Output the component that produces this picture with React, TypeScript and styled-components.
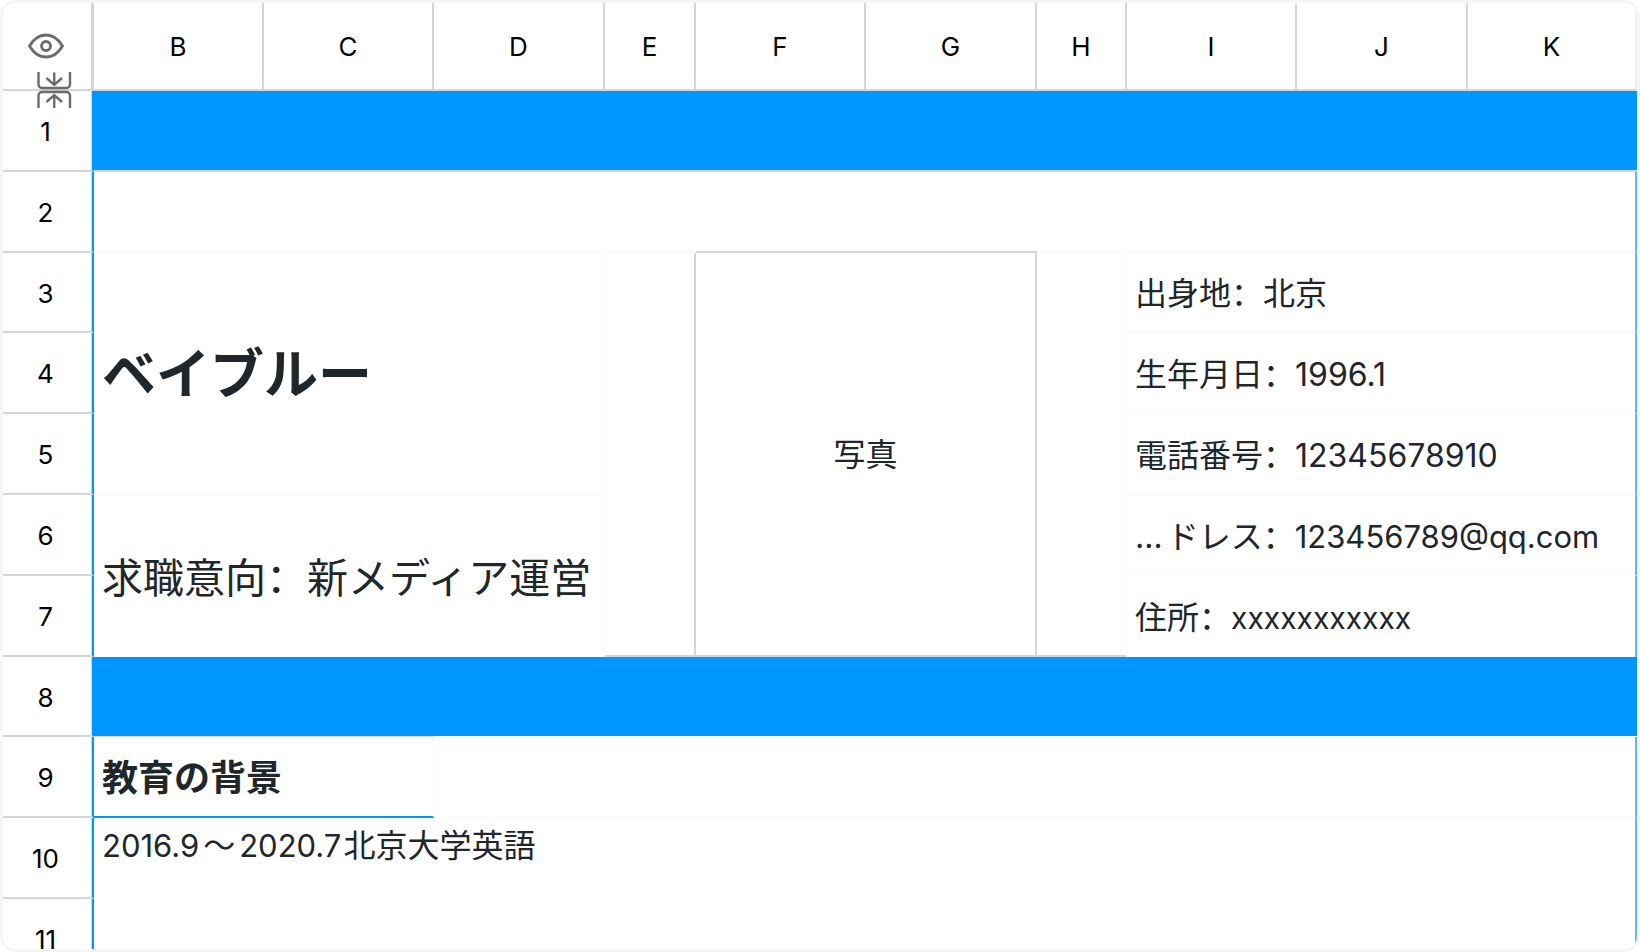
import React from "react";
import styled, { createGlobalStyle } from "styled-components";

const BLUE = "#0096ff";
const LINE = "#d6d6d6";
const FAINT = "#f8f8f8";

const GlobalStyle = createGlobalStyle`
  * { box-sizing: border-box; }
  body {
    margin: 0;
    background: #ffffff;
    font-family: Inter, "Noto Sans CJK JP", sans-serif;
  }
`;

const Frame = styled.main`
  position: relative;
  height: 100vh;
  overflow: hidden;
  border: 3px solid #f6f6f6;
  border-radius: 16px;
  background: #ffffff;
`;

const Sheet = styled.table`
  width: 100%;
  table-layout: fixed;
  border-collapse: separate;
  border-spacing: 0;
  color: #20262a;
`;

const Col = styled.col<{ $width: number }>`
  width: ${(p) => p.$width}px;
`;

const HeadRow = styled.tr`
  height: 88px;
`;

const Row = styled.tr<{ $height: number }>`
  height: ${(p) => p.$height}px;
`;

const ColumnHead = styled.th`
  padding: 2px 0 0;
  border-right: 2px solid ${LINE};
  border-bottom: 2px solid ${LINE};
  font-size: 26px;
  font-weight: 400;
  line-height: 32px;
  color: #000000;

  &:last-child {
    border-right-color: #f0f0f0;
  }
`;

const Corner = styled.td`
  padding: 0 2px 0 0;
  border-right: 3px solid ${LINE};
  border-bottom: 2px solid ${LINE};
`;

const IconButton = styled.button`
  display: block;
  margin: 0 auto;
  padding: 0;
  border: 0;
  background: none;
  color: #6b6b6b;

  svg {
    display: block;
  }
`;

const CollapseButton = styled(IconButton)`
  position: absolute;
  left: 33px;
  top: 68px;
`;

const RowHead = styled.th`
  padding: 3px 4px 0 0;
  border-right: 2px solid ${BLUE};
  border-bottom: 2px solid ${LINE};
  box-shadow: inset -1px 0 0 ${LINE};
  font-size: 26px;
  font-weight: 400;
  line-height: 32px;
  color: #000000;
`;

type CellProps = {
  $size?: number;
  $bold?: boolean;
  $fill?: boolean;
  $align?: string;
  $valign?: string;
  $padTop?: number;
  $right?: string;
  $bottom?: string;
};

const Cell = styled.td<CellProps>`
  padding: ${(p) => p.$padTop ?? 0}px 8px 0;
  border-right: ${(p) => p.$right ?? "0"};
  border-bottom: ${(p) => p.$bottom ?? "0"};
  background: ${(p) => (p.$fill ? BLUE : "transparent")};
  font-size: ${(p) => p.$size ?? 32}px;
  font-weight: ${(p) => (p.$bold ? 700 : 400)};
  line-height: 40px;
  text-align: ${(p) => p.$align ?? "left"};
  vertical-align: ${(p) => p.$valign ?? "middle"};
  white-space: nowrap;
`;

const Colon = styled.span`
  font-family: "Noto Sans CJK SC", sans-serif;
`;

const Value = styled.span<{ $size?: number }>`
  font-size: ${(p) => (p.$size ? `${p.$size}px` : "inherit")};
`;

const Ellipsis = styled.span`
  padding-right: 4px;
`;

const Wave = styled.span`
  padding: 0 4px;
`;

const School = styled.span`
  padding-left: 2px;
`;

const solid = `2px solid ${LINE}`;
const faint = `1px solid ${FAINT}`;
const edge = `2px solid #58b9ff`;

const columns = [
  { name: "B", width: 170 },
  { name: "C", width: 170 },
  { name: "D", width: 171 },
  { name: "E", width: 91 },
  { name: "F", width: 170 },
  { name: "G", width: 171 },
  { name: "H", width: 90 },
  { name: "I", width: 170 },
  { name: "J", width: 171 },
  { name: "K", width: 169 },
];

type FieldProps = { label: React.ReactNode; value: string; size?: number };

function Field({ label, value, size }: FieldProps) {
  return (
    <>
      {label}
      <Colon lang="zh">：</Colon>
      <Value $size={size}>{value}</Value>
    </>
  );
}

function EyeIcon() {
  return (
    <svg width="36" height="26" viewBox="0 0 36 26" fill="none" stroke="currentColor" strokeWidth="2.8" strokeLinejoin="round">
      <path d="M1.5 13C6 5.300 11.500 2 18 2S30 5.300 34.500 13C30 20.700 24.500 24 18 24S6 20.700 1.500 13Z" />
      <circle cx="18" cy="13" r="4.500" />
    </svg>
  );
}

function CollapseIcon() {
  return (
    <svg width="36" height="38" viewBox="0 0 36 38" fill="none" stroke="currentColor" strokeWidth="2.400">
      <path d="M2.500 1V13.500a3.500 3.500 0 0 0 3.500 3.500H30.500A3.500 3.500 0 0 0 34 13.500V1" />
      <path d="M2.500 37V24.500a3.500 3.500 0 0 1 3.500 -3.500H30.500A3.500 3.500 0 0 1 34 24.500V37" />
      <path d="M18.250 1.500V13.500M10.500 7L18.250 14L26 7" />
      <path d="M18.250 37V24.500M10.500 31L18.250 24L26 31" />
    </svg>
  );
}

export default function App() {
  return (
    <>
      <GlobalStyle />
      <Frame>
        <Sheet>
          <colgroup>
            <Col $width={91} />
            {columns.map((c) => (
              <Col key={c.name} $width={c.width} />
            ))}
          </colgroup>
          <thead>
            <HeadRow>
              <Corner>
                <IconButton type="button" aria-label="表示">
                  <EyeIcon />
                </IconButton>
              </Corner>
              {columns.map((c) => (
                <ColumnHead key={c.name} scope="col">
                  {c.name}
                </ColumnHead>
              ))}
            </HeadRow>
          </thead>
          <tbody>
            <Row $height={81}>
              <RowHead scope="row">1</RowHead>
              <Cell colSpan={10} $fill $bottom={solid} />
            </Row>
            <Row $height={81}>
              <RowHead scope="row">2</RowHead>
              <Cell colSpan={4} $bottom={faint} />
              <Cell colSpan={2} $bottom={solid} />
              <Cell colSpan={4} $right={edge} $bottom={faint} />
            </Row>
            <Row $height={80}>
              <RowHead scope="row">3</RowHead>
              <Cell colSpan={3} rowSpan={3} $size={54} $bold $padTop={2} $right={faint} $bottom={faint}>
                ベイブルー
              </Cell>
              <Cell rowSpan={5} $right={solid} $bottom={solid} />
              <Cell colSpan={2} rowSpan={5} $align="center" $padTop={2} $right={solid} $bottom={solid}>
                写真
              </Cell>
              <Cell rowSpan={5} $right={faint} $bottom={solid} />
              <Cell colSpan={3} $right={edge} $bottom={faint}>
                <Field label="出身地" value="北京" />
              </Cell>
            </Row>
            <Row $height={81}>
              <RowHead scope="row">4</RowHead>
              <Cell colSpan={3} $right={edge} $bottom={faint}>
                <Field label="生年月日" value="1996.1" />
              </Cell>
            </Row>
            <Row $height={81}>
              <RowHead scope="row">5</RowHead>
              <Cell colSpan={3} $right={edge} $bottom={faint}>
                <Field label="電話番号" value="12345678910" />
              </Cell>
            </Row>
            <Row $height={81}>
              <RowHead scope="row">6</RowHead>
              <Cell colSpan={3} rowSpan={2} $size={41} $right={faint}>
                <Field label="求職意向" value="新メディア運営" />
              </Cell>
              <Cell colSpan={3} $right={edge} $bottom={faint}>
                <Field label={<><Ellipsis>…</Ellipsis>ドレス</>} value="123456789@qq.com" size={31} />
              </Cell>
            </Row>
            <Row $height={81}>
              <RowHead scope="row">7</RowHead>
              <Cell colSpan={3} $right={edge}>
                <Field label="住所" value="xxxxxxxxxxx" size={30} />
              </Cell>
            </Row>
            <Row $height={80}>
              <RowHead scope="row">8</RowHead>
              <Cell colSpan={2} $fill $bottom={`1px solid ${LINE}`} />
              <Cell colSpan={8} $fill $bottom="1px solid #ffffff" />
            </Row>
            <Row $height={81}>
              <RowHead scope="row">9</RowHead>
              <Cell colSpan={2} $size={36} $bold $padTop={2} $right={faint} $bottom={`2px solid ${BLUE}`}>
                教育の背景
              </Cell>
              <Cell colSpan={8} $right={edge} $bottom={faint} />
            </Row>
            <Row $height={81}>
              <RowHead scope="row">10</RowHead>
              <Cell colSpan={10} $valign="top" $padTop={8} $right={edge}>
                <Value $size={31}>2016.9</Value>
                <Wave>～</Wave>
                <Value $size={31}>2020.7</Value>
                <School>北京大学英語</School>
              </Cell>
            </Row>
            <Row $height={81}>
              <RowHead scope="row">11</RowHead>
              <Cell colSpan={10} $right={edge} />
            </Row>
          </tbody>
        </Sheet>
        <CollapseButton type="button" aria-label="折りたたむ">
          <CollapseIcon />
        </CollapseButton>
      </Frame>
    </>
  );
}
